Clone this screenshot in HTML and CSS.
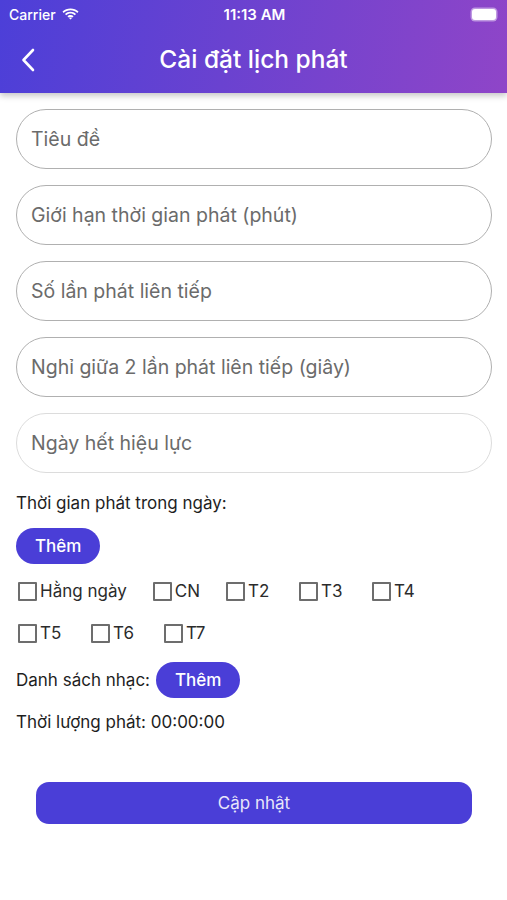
FILE: index.html
```html
<!DOCTYPE html>
<html lang="vi">
<head>
<meta charset="utf-8">
<title>Cài đặt lịch phát</title>
<link rel="stylesheet" href="styles.css">
</head>
<body>
<div class="screen">
  <header class="header">
    <div class="status">
      <div class="status-left">
        <span class="carrier">Carrier</span>
        <svg class="wifi" width="17" height="12" viewBox="0 0 17 12">
          <path d="M8.5 2.2c2.6 0 5 1 6.8 2.7l1.2-1.3C14.4 1.6 11.6.4 8.5.4S2.6 1.6.5 3.6l1.2 1.3C3.5 3.2 5.9 2.2 8.5 2.2z" fill="#fff"/>
          <path d="M8.5 5.6c1.6 0 3.1.6 4.3 1.7l1.2-1.3C12.5 4.6 10.6 3.8 8.5 3.8S4.5 4.6 3 6l1.2 1.3c1.2-1.1 2.7-1.7 4.3-1.7z" fill="#fff"/>
          <path d="M8.5 8.9c.7 0 1.3.3 1.8.7l1.3-1.3c-.8-.8-1.9-1.2-3.1-1.2s-2.3.5-3.1 1.2l1.3 1.3c.5-.4 1.1-.7 1.8-.7zM8.5 11.6l1.5-1.5c-.4-.4-.9-.6-1.5-.6s-1.1.2-1.5.6z" fill="#fff"/>
        </svg>
      </div>
      <span class="time">11:13 AM</span>
      <div class="battery"><span class="battery-fill"></span></div>
    </div>
    <div class="nav">
      <svg class="back" width="14" height="24" viewBox="0 0 14 24">
        <path d="M12 2L2.5 12 12 22" fill="none" stroke="#fff" stroke-width="2.6" stroke-linecap="round" stroke-linejoin="round"/>
      </svg>
      <h1 class="title">Cài đặt lịch phát</h1>
    </div>
  </header>

  <main class="content">
    <div class="field">Tiêu đề</div>
    <div class="field">Giới hạn thời gian phát (phút)</div>
    <div class="field">Số lần phát liên tiếp</div>
    <div class="field">Nghỉ giữa 2 lần phát liên tiếp (giây)</div>
    <div class="field field-light">Ngày hết hiệu lực</div>

    <p class="label first-label">Thời gian phát trong ngày:</p>
    <button class="pill">Thêm</button>

    <div class="checks">
      <label class="check"><span class="box"></span>Hằng ngày</label>
      <label class="check"><span class="box"></span>CN</label>
      <label class="check"><span class="box"></span>T2</label>
      <label class="check"><span class="box"></span>T3</label>
      <label class="check"><span class="box"></span>T4</label>
      <label class="check"><span class="box"></span>T5</label>
      <label class="check"><span class="box"></span>T6</label>
      <label class="check"><span class="box"></span>T7</label>
    </div>

    <div class="music">
      <span class="label">Danh sách nhạc:</span>
      <button class="pill">Thêm</button>
    </div>

    <p class="label duration">Thời lượng phát: 00:00:00</p>

    <button class="update">Cập nhật</button>
  </main>
</div>
</body>
</html>
```

FILE: styles.css
```css
* { box-sizing: border-box; }
html, body { margin: 0; padding: 0; }
body {
  background: #fff;
  font-family: Inter, "Noto Sans", "DejaVu Sans", sans-serif;
  color: #1e1e1e;
}
.screen { width: 507px; min-height: 900px; }

.header {
  height: 93px;
  background: linear-gradient(100deg, #4c3fd8 0%, #6a42d0 45%, #8f45c8 100%);
  box-shadow: 0 3px 6px rgba(0,0,0,0.22);
  color: #fff;
  position: relative;
  z-index: 1;
}
.status {
  height: 28px;
  display: flex;
  align-items: center;
  justify-content: space-between;
  padding: 0 7px 0 9px;
}
.status-left { display: flex; align-items: center; gap: 6px; width: 100px; }
.carrier { font-size: 14px; font-weight: 500; }
.time { font-size: 15px; font-weight: 600; }
.wifi { display: block; }
.battery {
  width: 100px;
  display: flex;
  justify-content: flex-end;
}
.battery-fill {
  display: block;
  width: 24px;
  height: 11px;
  border-radius: 3px;
  background: #fff;
  box-shadow: 0 0 0 1.5px rgba(255,255,255,0.45);
  margin-right: 4px;
}
.nav {
  height: 64px;
  display: flex;
  align-items: center;
  justify-content: center;
  position: relative;
}
.back { position: absolute; left: 21px; top: 20px; }
.title {
  margin: 0;
  font-size: 24.5px;
  font-weight: 500;
  margin-top: -2px;
}

.content {
  padding: 16px 15px 0 16px;
  display: flex;
  flex-direction: column;
  align-items: flex-start;
}
.field {
  width: 476px;
  height: 60px;
  border: 1.5px solid #b0b0b0;
  border-radius: 30px;
  padding-left: 14px;
  display: flex;
  align-items: center;
  font-size: 19.5px;
  color: #6b6b6b;
  margin-bottom: 16px;
}
.field-light { border-color: #dcdcdc; margin-bottom: 0; }

.label { margin: 0; font-size: 17px; color: #1e1e1e; }
.first-label { margin-top: 20px; }

.pill {
  height: 36px;
  padding: 0 19px;
  border: none;
  border-radius: 18px;
  background: #4a3ed7;
  color: #fff;
  font-family: inherit;
  font-size: 17px;
  font-weight: 500;
}
.first-label + .pill { margin-top: 15px; }

.checks {
  display: flex;
  flex-wrap: wrap;
  column-gap: 26px;
  row-gap: 22px;
  width: 455px;
  margin-top: 17px;
  padding-left: 2px;
}
.check {
  display: flex;
  align-items: center;
  gap: 3px;
  min-width: 47px;
  font-size: 17px;
  color: #2b2b2b;
  height: 20px;
}
.box {
  width: 19px;
  height: 19px;
  border: 2px solid #6d6d6d;
  border-radius: 1px;
}

.music {
  display: flex;
  align-items: center;
  gap: 6px;
  margin-top: 19px;
}
.duration { margin-top: 14px; }

.update {
  align-self: center;
  margin-top: 50px;
  width: 436px;
  height: 42px;
  border: none;
  border-radius: 13px;
  background: #4a3ed7;
  color: #e8e6fa;
  font-family: inherit;
  font-size: 17px;
}
```
